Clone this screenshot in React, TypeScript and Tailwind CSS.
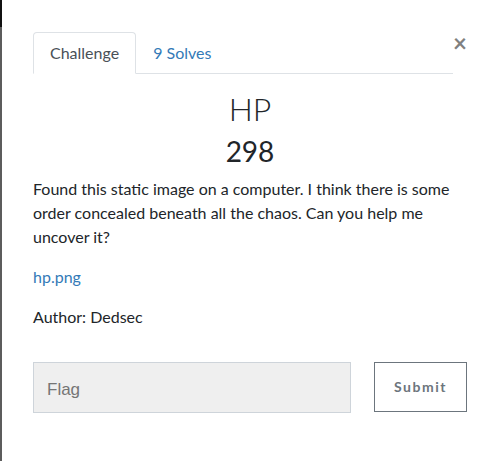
import React from 'react';

const App = () => {
  return (
    <div
      className="flex w-[496px] h-[461px] bg-white overflow-hidden"
      style={{ fontFamily: 'Lato, "Noto Sans", sans-serif' }}
    >
      {/* left edge of the backdrop */}
      <div className="flex flex-col w-[2px] shrink-0">
        <div className="h-[27px] bg-[#111]" />
        <div className="flex-1 bg-[#5c5c5c]" />
      </div>

      <div className="flex-1 pl-[31px] pr-[29px]">
        {/* Tabs + close */}
        <div className="flex items-start mt-[32px]">
          <div className="flex w-[420px] border-b border-[#dee2e6]">
            <div className="-mb-px px-4 py-2 border border-[#dee2e6] border-b-white rounded-t-[4px] bg-white text-[16px] leading-6 text-[#495057]">
              Challenge
            </div>
            <div className="-mb-px px-4 py-2 border border-transparent text-[16px] leading-6 text-[#337ab7]">
              9 Solves
            </div>
          </div>
          <button className="ml-auto mt-[-1px] text-[24px] leading-6 font-bold text-[#808080]">
            ×
          </button>
        </div>

        {/* Title */}
        <div className="text-center mt-[16px] text-[#212529]">
          <h3 className="text-[32px] leading-[1.2] font-light">HP</h3>
          <h4 className="mt-[7px] text-[28px] leading-[1.2] font-normal">298</h4>
        </div>

        {/* Description */}
        <div className="mt-[8px] text-[16px] leading-6 text-[#212529]">
          <p className="mb-4">
            Found this static image on a computer. I think there is some order concealed beneath all the chaos. Can you help me uncover it?
          </p>
          <p className="mb-4">
            <a className="text-[#337ab7]">hp.png</a>
          </p>
          <p>Author: Dedsec</p>
        </div>

        {/* Flag form */}
        <div className="flex mt-[33px] gap-[23px]">
          <div
            className="w-[318px] h-[51px] flex items-center pt-[4px] px-[13px] bg-[#efefef] border border-[#ced4da] text-[17px] text-[#757575]"
            style={{ fontFamily: '"Liberation Sans", Arial, sans-serif' }}
          >
            Flag
          </div>
          <button className="w-[93px] h-[50px] border border-[#6c757d] bg-white text-[14px] font-bold tracking-[1.5px] text-[#6c757d]">
            Submit
          </button>
        </div>
      </div>
    </div>
  );
};

export default App;
